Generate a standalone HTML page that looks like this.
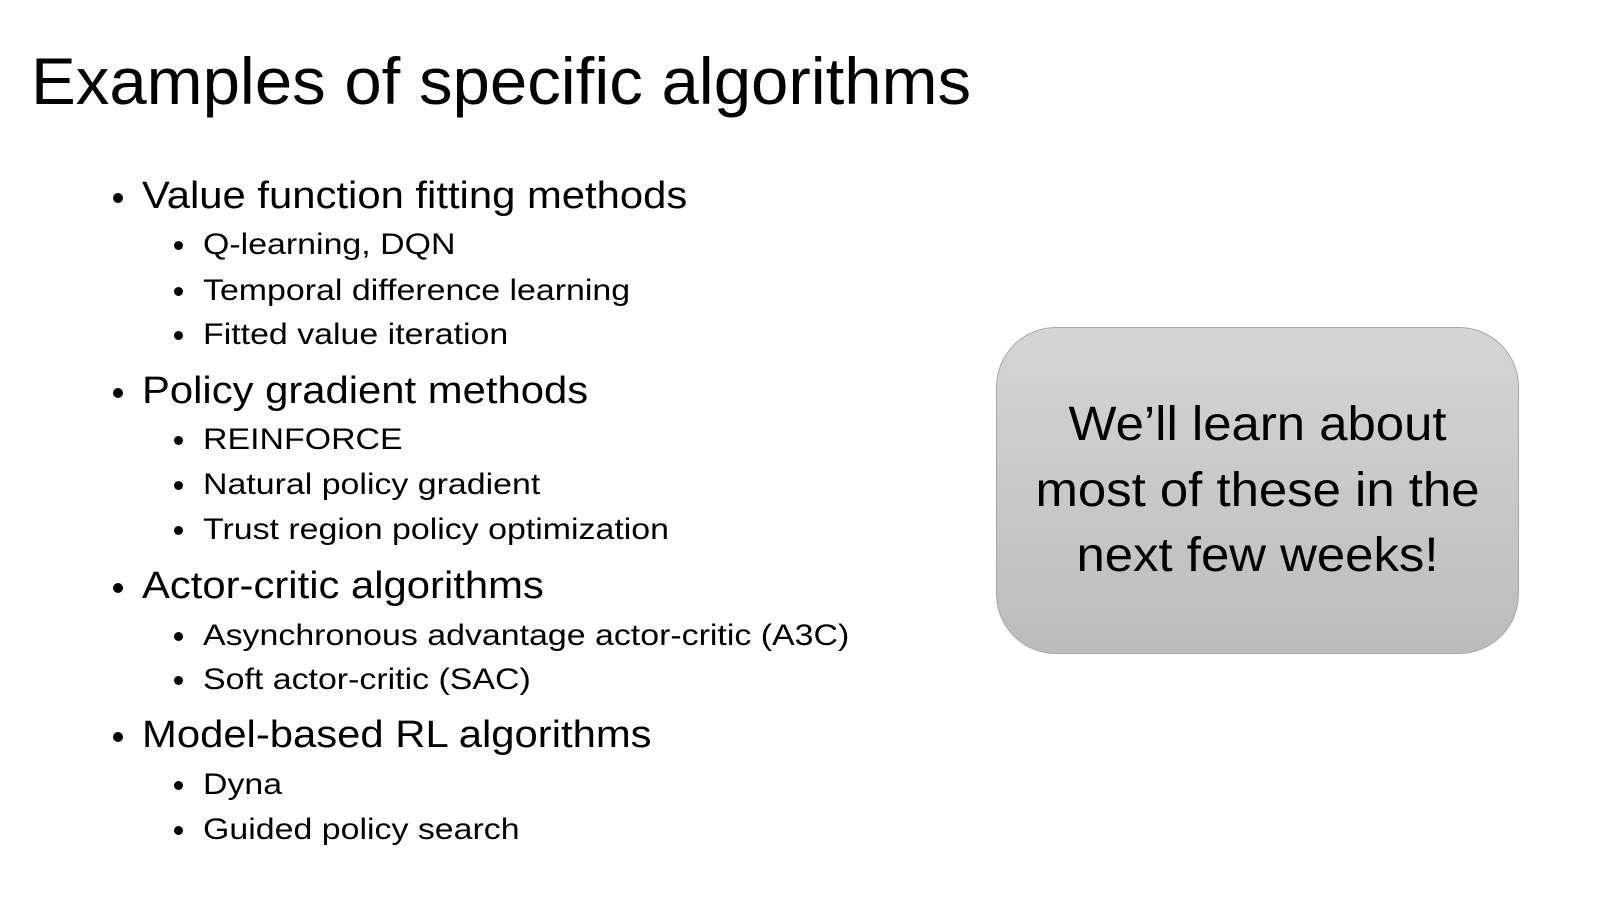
<!DOCTYPE html>
<html><head><meta charset="utf-8"><style>
html,body{margin:0;padding:0;background:#fff;}
body{width:1619px;height:898px;position:relative;overflow:hidden;font-family:"Liberation Sans",sans-serif;color:#000;}
.t{position:absolute;white-space:nowrap;transform-origin:0 0;}
.l1{font-size:38px;line-height:38px;transform:scaleX(1.1);left:142px;}
.l2{font-size:30px;line-height:30px;transform:scaleX(1.13);left:203px;}
.d{position:absolute;border-radius:50%;background:#000;}
.d1{left:113px;width:10px;height:10px;}
.d2{left:174px;width:9px;height:9px;}
.box{position:absolute;left:996px;top:327px;width:523px;height:327px;border-radius:60px;background:linear-gradient(#d5d5d5,#bcbcbc);border:1px solid #a8a8a8;box-sizing:border-box;}
.bt{position:absolute;left:996px;width:523px;text-align:center;font-size:48px;line-height:48px;white-space:nowrap;transform:scaleX(1.06);transform-origin:50% 0;}
</style></head><body>
<div class="t" style="left:31px;top:48px;font-size:66px;line-height:66px;transform:scaleX(1.017)">Examples of specific algorithms</div>

<div class="d d1" style="top:193px"></div>
<div class="t l1" style="top:177px">Value function fitting methods</div>
<div class="d d2" style="top:241px"></div>
<div class="t l2" style="top:230px">Q-learning, DQN</div>
<div class="d d2" style="top:287px"></div>
<div class="t l2" style="top:276px">Temporal difference learning</div>
<div class="d d2" style="top:331px"></div>
<div class="t l2" style="top:320px">Fitted value iteration</div>

<div class="d d1" style="top:388px"></div>
<div class="t l1" style="top:372px">Policy gradient methods</div>
<div class="d d2" style="top:436px"></div>
<div class="t l2" style="top:425px">REINFORCE</div>
<div class="d d2" style="top:481px"></div>
<div class="t l2" style="top:470px">Natural policy gradient</div>
<div class="d d2" style="top:526px"></div>
<div class="t l2" style="top:515px">Trust region policy optimization</div>

<div class="d d1" style="top:583px"></div>
<div class="t l1" style="top:567px">Actor-critic algorithms</div>
<div class="d d2" style="top:632px"></div>
<div class="t l2" style="top:621px">Asynchronous advantage actor-critic (A3C)</div>
<div class="d d2" style="top:676px"></div>
<div class="t l2" style="top:665px">Soft actor-critic (SAC)</div>

<div class="d d1" style="top:732px"></div>
<div class="t l1" style="top:716px">Model-based RL algorithms</div>
<div class="d d2" style="top:781px"></div>
<div class="t l2" style="top:770px">Dyna</div>
<div class="d d2" style="top:826px"></div>
<div class="t l2" style="top:815px">Guided policy search</div>

<div class="box"></div>
<div class="bt" style="top:401px">We’ll learn about</div>
<div class="bt" style="top:467px">most of these in the</div>
<div class="bt" style="top:532px">next few weeks!</div>
</body></html>
